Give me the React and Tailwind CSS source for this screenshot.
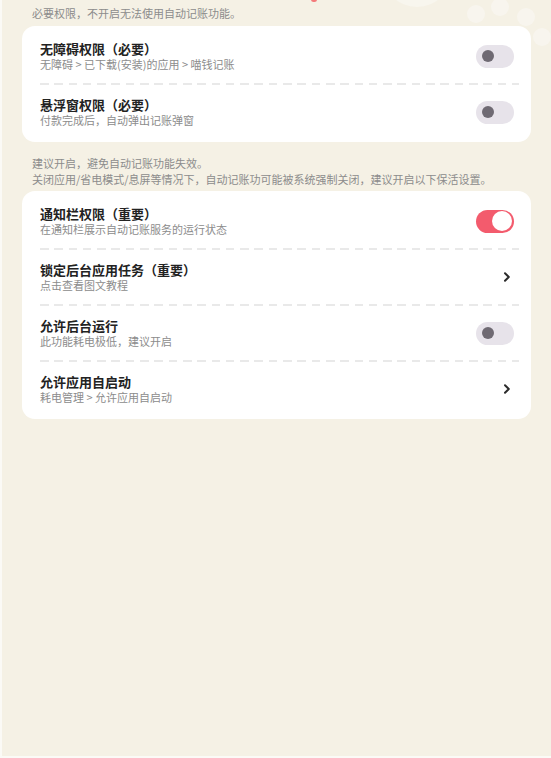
import React, { useState } from 'react';

const font = { fontFamily: '"Noto Sans CJK SC", "Noto Sans", sans-serif' };

const Toggle = ({ on, onChange }) => (
    <button
        onClick={onChange}
        className={`w-[38px] h-[23px] rounded-full shrink-0 flex items-center ${on ? 'bg-[#f35b6d] justify-end pr-[2px]' : 'bg-[#e7e3ea] justify-start pl-[6px]'}`}
    >
        {on ? (
            <span className="w-[20px] h-[20px] rounded-full bg-white" />
        ) : (
            <span className="w-[12px] h-[12px] rounded-full bg-[#6f6a73]" />
        )}
    </button>
);

const Chevron = () => (
    <svg width="16" height="16" viewBox="0 0 16 16" className="shrink-0 mr-[-1px]">
        <path d="M6 4.2 L9.8 8 L6 11.8" fill="none" stroke="#2b2b2b" strokeWidth="2" strokeLinecap="round" strokeLinejoin="round" />
    </svg>
);

const Divider = () => (
    <div className="ml-[18px] mr-[12px] h-[2px] bg-[repeating-linear-gradient(to_right,#e9e9e9_0,#e9e9e9_8.5px,transparent_8.5px,transparent_14.3px)]" />
);

const Row = ({ title, desc, right }) => (
    <div className="h-[54px] flex items-center pl-[18px] pr-[17px]">
        <div className="flex-1 min-w-0 flex flex-col">
            <span className="text-[13px] leading-[17px] font-bold text-[#222]">{title}</span>
            <span className="text-[11px] leading-[15px] text-[#8c8c8c]">{desc}</span>
        </div>
        {right}
    </div>
);

const Card = ({ rows }) => (
    <div className="mx-[20px] bg-white rounded-[13px] py-[3px]">
        {rows.map((r, i) => (
            <React.Fragment key={r.title}>
                {i > 0 && <Divider />}
                <Row {...r} />
            </React.Fragment>
        ))}
    </div>
);

export default function App() {
    const [sw, setSw] = useState({ a11y: false, float: false, notify: true, bg: false });
    const flip = (k) => setSw({ ...sw, [k]: !sw[k] });

    const required = [
        { title: '无障碍权限（必要）', desc: '无障碍 > 已下载(安装)的应用 > 喵钱记账', right: <Toggle on={sw.a11y} onChange={() => flip('a11y')} /> },
        { title: '悬浮窗权限（必要）', desc: '付款完成后，自动弹出记账弹窗', right: <Toggle on={sw.float} onChange={() => flip('float')} /> },
    ];

    const keepAlive = [
        { title: '通知栏权限（重要）', desc: '在通知栏展示自动记账服务的运行状态', right: <Toggle on={sw.notify} onChange={() => flip('notify')} /> },
        { title: '锁定后台应用任务（重要）', desc: '点击查看图文教程', right: <Chevron /> },
        { title: '允许后台运行', desc: '此功能耗电极低，建议开启', right: <Toggle on={sw.bg} onChange={() => flip('bg')} /> },
        { title: '允许应用自启动', desc: '耗电管理 > 允许应用自启动', right: <Chevron /> },
    ];

    return (
        <div style={font} className="relative h-[758px] overflow-hidden bg-[#f5f1e5] border-l-2 border-b-2 border-[#fbfaf6]">
            {/* decoration bits peeking from the header above */}
            <div className="absolute left-[380px] top-[-63px] w-[70px] h-[70px] rounded-full bg-[#f8f6ee]" />
            <div className="absolute left-[465px] top-[5px] w-[18px] h-[18px] rounded-full bg-[#f8f5ee]" />
            <div className="absolute left-[489px] top-[-2px] w-[18px] h-[18px] rounded-full bg-[#f8f5ee]" />
            <div className="absolute left-[515px] top-[8px] w-[18px] h-[18px] rounded-full bg-[#f8f5ee]" />
            <div className="absolute left-[531px] top-[28px] w-[18px] h-[18px] rounded-full bg-[#f8f5ee]" />
            <div className="absolute left-[309px] top-[-3px] w-[6px] h-[5px] rounded-full bg-[#f47a7a]" />

            <div className="relative pt-[5px] flex flex-col">
                <p className="pl-[30px] text-[11px] leading-[16px] text-[#8c8c8c]">必要权限，不开启无法使用自动记账功能。</p>
                <div className="mt-[5px]">
                    <Card rows={required} />
                </div>
                <div className="mt-[13px] pl-[30px] text-[11px] leading-[16px] text-[#8c8c8c] flex flex-col">
                    <p>建议开启，避免自动记账功能失效。</p>
                    <p>关闭应用/省电模式/息屏等情况下，自动记账功可能被系统强制关闭，建议开启以下保活设置。</p>
                </div>
                <div className="mt-[4px]">
                    <Card rows={keepAlive} />
                </div>
            </div>
        </div>
    );
}
